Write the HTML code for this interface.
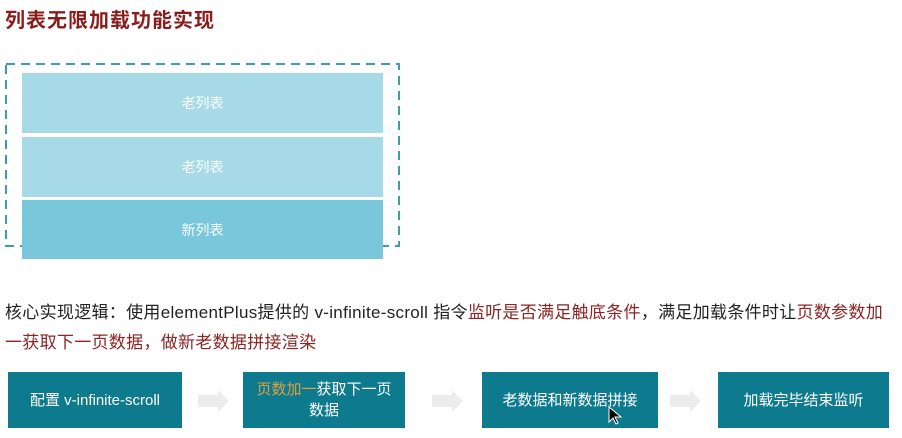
<!DOCTYPE html>
<html><head><meta charset="utf-8"><style>
body{margin:0;width:902px;height:438px;background:#fff;position:relative;overflow:hidden;font-family:"Liberation Sans","Noto Sans CJK SC",sans-serif}
.a{position:absolute}
.row{position:absolute;left:22px;width:361px;color:#fff;font-size:14px;display:flex;align-items:center;justify-content:center}
.box{position:absolute;top:372px;height:56px;background:#0e7a8e;color:#fff;font-size:15px;display:flex;align-items:center;justify-content:center;text-align:center;line-height:21px}
.red{color:#8e2323}
</style></head><body>
<div class="a" style="left:5px;top:4px;font-size:20px;font-weight:bold;color:#8b1c1c;letter-spacing:1px">列表无限加载功能实现</div>
<svg class="a" style="left:0;top:0" width="420" height="260"><rect x="6" y="64" width="393" height="182" fill="none" stroke="#3e9ea8" stroke-width="2" stroke-dasharray="9 6"/></svg>
<div class="row" style="top:73px;height:60px;background:#a5dae6">老列表</div>
<div class="row" style="top:137px;height:60px;background:#a5dae6">老列表</div>
<div class="row" style="top:200px;height:59px;background:#79c7da">新列表</div>
<div class="a" style="left:5px;top:298px;font-size:17px;letter-spacing:0.3px;color:#222;line-height:30px;width:897px;white-space:nowrap">核心实现逻辑：使用elementPlus提供的 v-infinite-scroll 指令<span class="red">监听是否满足触底条件</span>，满足加载条件时让<span class="red">页数参数加</span><br><span class="red">一获取下一页数据，做新老数据拼接渲染</span></div>
<div class="box" style="left:8px;width:174px">配置 v-infinite-scroll</div>
<div class="box" style="left:243px;width:162px"><div><span style="color:#e0a040">页数加一</span>获取下一页<br>数据</div></div>
<div class="box" style="left:482px;width:176px">老数据和新数据拼接</div>
<div class="box" style="left:718px;width:171px">加载完毕结束监听</div>
<svg class="a" style="left:0;top:388px" width="902" height="26">
<g fill="#ececec"><path d="M198 7h20v-5l11 11-11 11v-5h-20z"/><path d="M432 7h20v-5l11 11-11 11v-5h-20z"/><path d="M670 7h20v-5l11 11-11 11v-5h-20z"/></g></svg>
<svg class="a" style="left:608px;top:406px" width="14" height="20"><path d="M1 1v15l4-4 3 6 2-1-3-6h6z" fill="#000" stroke="#fff" stroke-width="1"/></svg>
</body></html>
